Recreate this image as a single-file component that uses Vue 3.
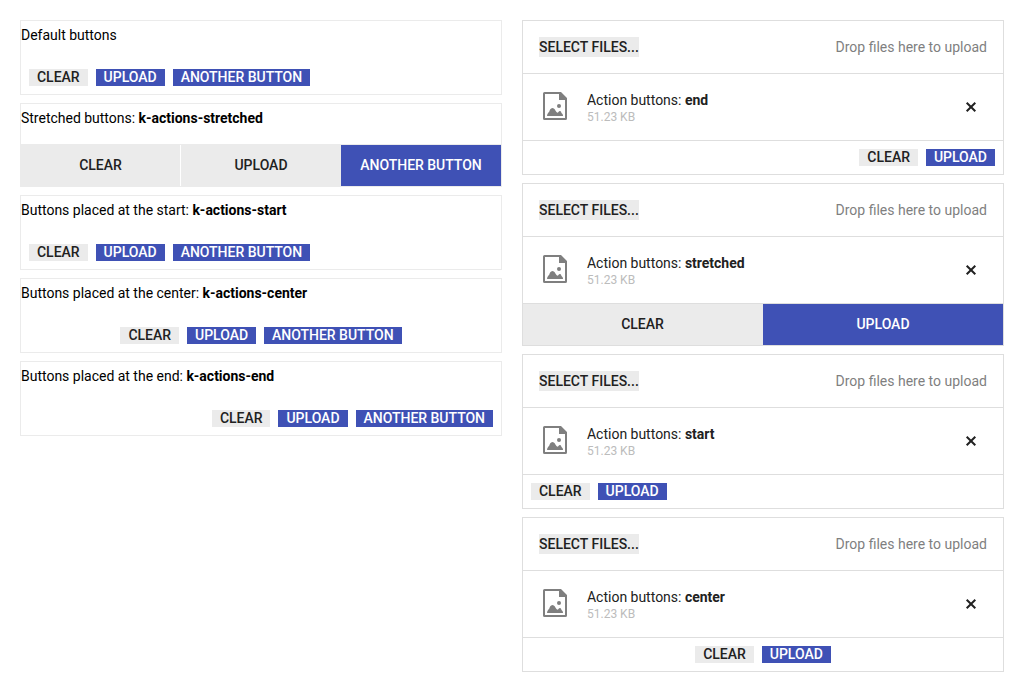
<script setup>
const examples = [
  { text: 'Default buttons', name: '', mode: 'start' },
  { text: 'Stretched buttons: ', name: 'k-actions-stretched', mode: 'stretched' },
  { text: 'Buttons placed at the start: ', name: 'k-actions-start', mode: 'start' },
  { text: 'Buttons placed at the center: ', name: 'k-actions-center', mode: 'center' },
  { text: 'Buttons placed at the end: ', name: 'k-actions-end', mode: 'end' }
]
const uploads = ['end', 'stretched', 'start', 'center']
</script>

<template>
  <main class="page">
    <section class="column">
      <div v-for="item in examples" :key="item.text" class="card" :class="{ tall: item.mode === 'stretched' }">
        <p class="caption">{{ item.text }}<strong v-if="item.name">{{ item.name }}</strong></p>
        <div class="actions" :class="item.mode">
          <button class="btn">CLEAR</button>
          <button class="btn" :class="{ primary: item.mode !== 'stretched' }">UPLOAD</button>
          <button class="btn primary">ANOTHER BUTTON</button>
        </div>
      </div>
    </section>
    <section class="column">
      <div v-for="mode in uploads" :key="mode" class="upload">
        <div class="dropzone">
          <span class="select">SELECT FILES...</span>
          <span class="hint">Drop files here to upload</span>
        </div>
        <div class="file">
          <svg class="file-icon" width="32" height="32" viewBox="0 0 32 32" fill="currentColor">
            <path fill-rule="evenodd" d="M5.5 2H22l6 6v20.500a1.500 1.500 0 0 1-1.500 1.500h-21A1.500 1.500 0 0 1 4 28.500v-25A1.500 1.500 0 0 1 5.500 2zM6 4v24h20V10h-6V4z" />
            <circle cx="20" cy="16" r="2" />
            <path d="M8 26c.2-2 1.200-3.200 2.200-4.200.6-1.400 1.200-3.800 3.300-3.800 2 0 2.700 2.300 3.600 3.600.4.600 1 1.200 1.400 1.200.8 0 1-1.800 2.500-1.800 1.200 0 1.200 2 2 2.600.6.500 1 1.200 1 2.400z" />
          </svg>
          <div class="details">
            <span class="filename">Action buttons: <strong>{{ mode }}</strong></span>
            <span class="size">51.23 KB</span>
          </div>
          <svg class="remove" width="16" height="16" viewBox="0 0 16 16">
            <path d="M3.700 3.700l8.600 8.600M12.300 3.700l-8.600 8.600" stroke="currentColor" stroke-width="2" />
          </svg>
        </div>
        <div class="actions" :class="mode">
          <button class="btn">CLEAR</button>
          <button class="btn primary">UPLOAD</button>
        </div>
      </div>
    </section>
  </main>
</template>

<style>
body {
  margin: 0;
  background: #fff;
}
</style>

<style scoped>
.page {
  box-sizing: border-box;
  display: grid;
  grid-template-columns: 482px 482px;
  gap: 20px;
  padding: 20px;
  font: 14px/28px Roboto, sans-serif;
  color: #000;
}
.column {
  display: flex;
  flex-direction: column;
  gap: 8px;
}
.card {
  box-sizing: border-box;
  display: flex;
  flex-direction: column;
  height: 75px;
  border: 1px solid #ebebeb;
}
.card.tall {
  height: 84px;
}
.caption {
  margin: 0;
  letter-spacing: -0.01px;
}
.actions {
  display: flex;
  gap: 8px;
  padding: 8px;
  border-top: 1px solid #dedede;
}
.card .actions {
  margin-top: auto;
  border-top-color: transparent;
}
.card .actions.stretched {
  border-top-color: #ebebeb;
}
.center {
  justify-content: center;
}
.end {
  justify-content: flex-end;
}
.btn {
  height: 17px;
  margin: 0;
  padding: 0 8px;
  border: 0;
  border-radius: 0;
  background: #ebebeb;
  color: #212121;
  font: 500 14px/17px Roboto, sans-serif;
  letter-spacing: -0.02px;
  white-space: nowrap;
}
.btn.primary {
  background: #3f51b5;
  color: #fff;
}
.actions.stretched {
  display: grid;
  grid-auto-flow: column;
  grid-auto-columns: 1fr;
  gap: 0;
  padding: 0;
}
.stretched .btn {
  box-sizing: border-box;
  height: 41px;
}
.stretched .btn:first-child {
  padding-right: 9px;
}
.card .stretched .btn:first-child {
  padding-right: 8px;
  border-right: 1px solid #fff;
}
.upload {
  border: 1px solid #dedede;
  color: #212121;
}
.dropzone {
  display: flex;
  align-items: center;
  justify-content: space-between;
  height: 52px;
  padding: 0 16px;
  line-height: 20px;
}
.select {
  background: #ebebeb;
  font-weight: 500;
}
.hint {
  color: #7f7f7f;
}
.file {
  display: flex;
  align-items: center;
  height: 66px;
  padding: 0 24px 0 16px;
  border-top: 1px solid #dedede;
}
.file-icon {
  margin: -2px 16px 0 0;
  color: #7f7f7f;
}
.details {
  display: flex;
  flex: 1;
  flex-direction: column;
}
.filename {
  line-height: 20px;
  letter-spacing: -0.01px;
}
.size {
  font-size: 12px;
  line-height: 14px;
  color: #bcbcbc;
}
.remove {
  color: #212121;
}
</style>
